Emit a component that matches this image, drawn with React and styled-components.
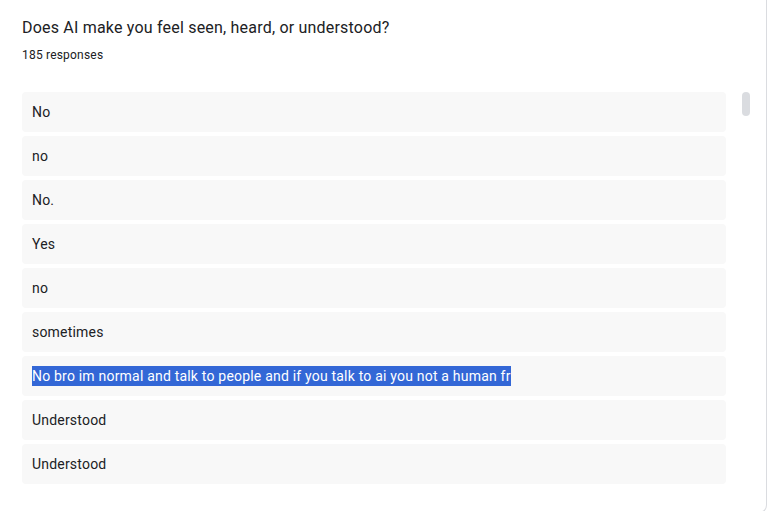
import React from "react";
import styled, { createGlobalStyle } from "styled-components";

const GlobalStyle = createGlobalStyle`
  html, body { margin: 0; padding: 0; background: #ffffff; }
  body { font-family: Roboto, "Noto Sans", Arial, sans-serif; color: #202124; overflow: hidden; }
`;

const Card = styled.div`
  box-sizing: border-box;
  width: 767px;
  height: 513px;
  border-right: 1px solid #dadce0;
  border-bottom: 1px solid #dadce0;
  border-bottom-right-radius: 8px;
  background: #fff;
  padding: 16px 0 0 22px;
`;

const Title = styled.div`
  font-size: 16px;
  line-height: 24px;
  color: #202124;
  letter-spacing: 0.2px;
`;

const Count = styled.div`
  margin-top: 7px;
  font-size: 12px;
  line-height: 16px;
  color: #202124;
  letter-spacing: 0.2px;
`;

const ListArea = styled.div`
  margin-top: 29px;
  display: flex;
  align-items: flex-start;
`;

const List = styled.div`
  width: 704px;
  display: flex;
  flex-direction: column;
  gap: 4px;
`;

const Row = styled.div`
  box-sizing: border-box;
  height: 40px;
  padding: 0 10px;
  display: flex;
  align-items: center;
  background: #f8f8f8;
  border-radius: 4px;
  font-size: 14px;
  color: #202124;
  letter-spacing: 0.2px;
  white-space: nowrap;
`;

const Selected = styled.span`
  display: inline-block;
  line-height: 20px;
  background: #3367d6;
  color: #ffffff;
`;

const Scrollbar = styled.div`
  margin-left: 16px;
  width: 8px;
  height: 24px;
  border-radius: 4px;
  background: #dadce0;
`;

const answers = [
  { text: "No" },
  { text: "no" },
  { text: "No." },
  { text: "Yes" },
  { text: "no" },
  { text: "sometimes" },
  { text: "No bro im normal and talk to people and if you talk to ai you not a human fr", selected: true },
  { text: "Understood" },
  { text: "Understood" },
];

export default function App() {
  return (
    <>
      <GlobalStyle />
      <Card>
        <Title>Does AI make you feel seen, heard, or understood?</Title>
        <Count>185 responses</Count>
        <ListArea>
          <List>
            {answers.map((a, i) => (
              <Row key={i}>{a.selected ? <Selected>{a.text}</Selected> : a.text}</Row>
            ))}
          </List>
          <Scrollbar />
        </ListArea>
      </Card>
    </>
  );
}
